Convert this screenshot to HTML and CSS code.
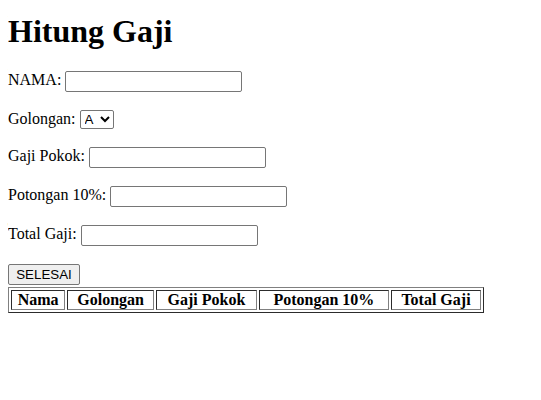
FILE: index.html
```html
<!DOCTYPE html>
<html>
<head>
<meta charset="utf-8">
<title>Hitung Gaji</title>
<link rel="stylesheet" href="styles.css">
</head>
<body class="page">
<h1 class="title">Hitung Gaji</h1>
<form class="form">
  <p class="row">NAMA: <input class="field" type="text"></p>
  <p class="row row-select">Golongan: <select class="picker"><option>A</option><option>B</option><option>C</option></select></p>
  <p class="row">Gaji Pokok: <input class="field" type="text"></p>
  <p class="row">Potongan 10%: <input class="field" type="text"></p>
  <p class="row">Total Gaji: <input class="field" type="text"></p>
  <div class="actions"><button class="btn" type="button">SELESAI</button></div>
</form>
<table class="grid">
  <tr>
    <th class="head">Nama</th>
    <th class="head">Golongan</th>
    <th class="head">Gaji Pokok</th>
    <th class="head">Potongan 10%</th>
    <th class="head">Total Gaji</th>
  </tr>
</table>
</body>
</html>
```
FILE: styles.css
```css
.page {
  margin: 8px;
  font-family: "Liberation Serif", "Times New Roman", serif;
  font-size: 16px;
  color: #000;
  background: #fff;
}
.title {
  font-size: 32px;
  font-weight: bold;
  margin: 5px 0 21px;
}
.form { margin: 0; }
.row {
  margin: 16px 0;
  height: 23px;
}
.row-select { height: 21px; }
.field {
  font-family: "Liberation Sans", Arial, sans-serif;
  font-size: 13.33px;
  width: 177px;
  height: 21px;
  box-sizing: border-box;
  border: 1px solid #767676;
  border-radius: 2px;
  padding: 1px 2px;
  vertical-align: top;
}
.picker {
  font-family: "Liberation Sans", Arial, sans-serif;
  font-size: 13.33px;
  width: 34px;
  height: 19px;
  box-sizing: border-box;
  border: 1px solid #767676;
  border-radius: 2px;
  background: #fff;
  color: #000;
  vertical-align: top;
}
.actions { height: 23px; }
.btn {
  font-family: "Liberation Sans", Arial, sans-serif;
  font-size: 13.33px;
  width: 72px;
  height: 21px;
  padding: 1px 6px;
  border: 1px solid #767676;
  border-radius: 2px;
  background: #efefef;
  color: #000;
  vertical-align: top;
}
.grid {
  width: 476px;
  border: 1px outset #808080;
  border-spacing: 2px;
}
.head {
  border: 1px inset #808080;
  padding: 0;
  font-weight: bold;
}
```
